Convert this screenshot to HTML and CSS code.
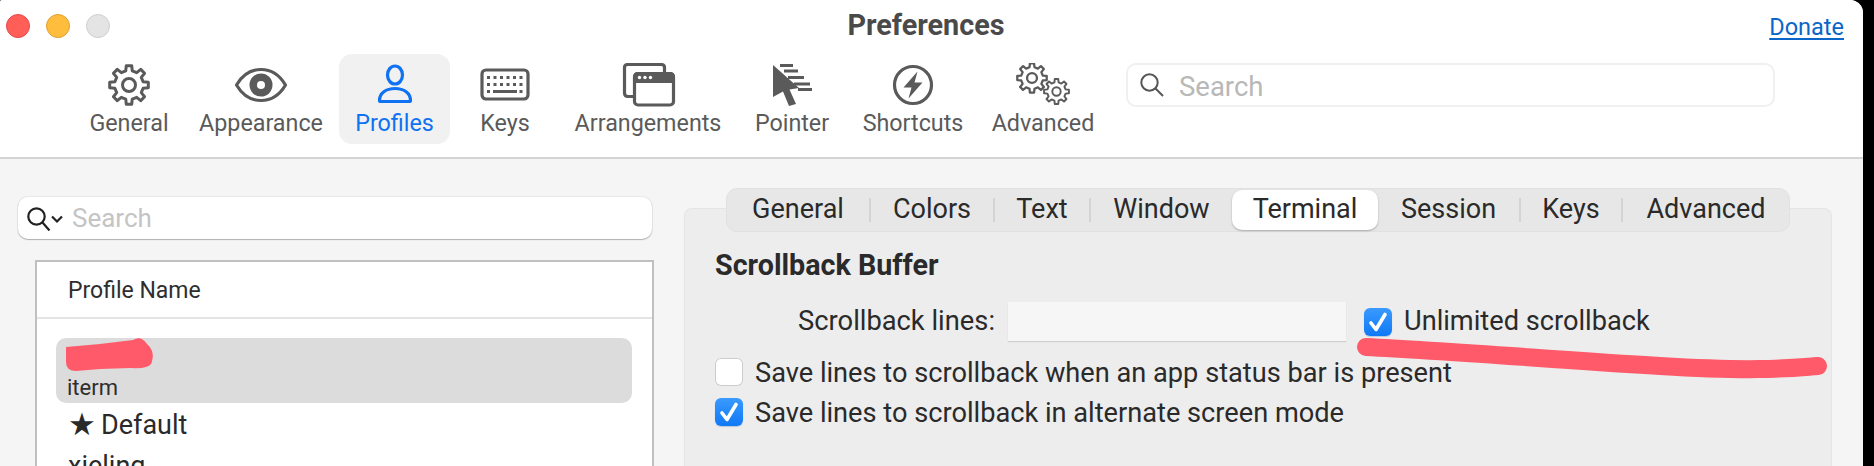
FILE: index.html
```html
<!DOCTYPE html>
<html lang="en">
<head>
<meta charset="utf-8">
<title>Preferences</title>
<link rel="stylesheet" href="styles.css">
</head>
<body>
<svg class="defs" width="0" height="0" aria-hidden="true">
  <symbol id="gear" viewBox="-21 -21 42 42">
    <polygon class="gear-shape" points="14.13,-3.26 19.31,-2.71 19.31,2.71 14.13,3.26 12.3,7.68 15.57,11.74 11.74,15.57 7.68,12.3 3.26,14.13 2.71,19.31 -2.71,19.31 -3.26,14.13 -7.68,12.3 -11.74,15.57 -15.57,11.74 -12.3,7.68 -14.13,3.26 -19.31,2.71 -19.31,-2.71 -14.13,-3.26 -12.3,-7.68 -15.57,-11.74 -11.74,-15.57 -7.68,-12.3 -3.26,-14.13 -2.71,-19.31 2.71,-19.31 3.26,-14.13 7.68,-12.3 11.74,-15.57 15.57,-11.74 12.3,-7.68"/>
    <circle class="gear-shape" r="6.5"/>
  </symbol>
  <symbol id="tick" viewBox="0 0 28 28">
    <path class="tick-shape" d="M7 15 L12 21.500 L21 6.500"/>
  </symbol>
</svg>
<div class="window">
  <header class="head">
    <div class="titlebar">
      <div class="lights">
        <span class="light light-red"></span>
        <span class="light light-yellow"></span>
        <span class="light light-gray"></span>
      </div>
      <div class="title">Preferences</div>
      <a class="donate" href="#">Donate</a>
    </div>
    <div class="toolbar">
      <nav class="tools">
        <div class="tool">
          <svg class="ico" viewBox="0 0 60 44"><use href="#gear" x="9" y="1" width="42" height="42"/></svg>
          <span class="tool-label">General</span>
        </div>
        <div class="tool">
          <svg class="ico" viewBox="0 0 60 44"><path class="line" d="M5.5 22 C12 11 21 6.5 30 6.5 S48 11 54.500 22 C48 33 39 37.500 30 37.500 S12 33 5.500 22 Z"/><circle class="solid" cx="30" cy="22" r="11.500"/><circle class="hole" cx="30" cy="22" r="4"/></svg>
          <span class="tool-label">Appearance</span>
        </div>
        <div class="tool tool-active">
          <svg class="ico" viewBox="0 0 60 44"><ellipse class="line-blue" cx="30" cy="12" rx="7.500" ry="9"/><path class="line-blue" d="M14.500 37.500 C14.500 30 21 25.500 30 25.500 S45.500 30 45.500 37.500 C45.500 38.300 45 38.500 44 38.500 H16 C15 38.500 14.500 38.300 14.500 37.500 Z"/></svg>
          <span class="tool-label">Profiles</span>
        </div>
        <div class="tool">
          <svg class="ico" viewBox="0 0 60 44"><rect class="line" x="7" y="7" width="46" height="29" rx="4"/><path class="keys" d="M12 13h3v3h-3zM18.500 13h3v3h-3zM25 13h3v3h-3zM31.500 13h3v3h-3zM38 13h3v3h-3zM44.500 13h3v3h-3zM12 20h3v3h-3zM18.500 20h3v3h-3zM25 20h3v3h-3zM31.500 20h3v3h-3zM38 20h3v3h-3zM44.500 20h3v3h-3zM12 27h3v3h-3zM18 27h24v3H18zM44.500 27h3v3h-3z"/></svg>
          <span class="tool-label">Keys</span>
        </div>
        <div class="tool">
          <svg class="ico" viewBox="0 0 60 44"><path class="line" d="M15 33.500 H10 Q6.500 33.500 6.500 30 V4.500 Q6.500 1.500 10 1.500 H43 Q46.500 1.500 46.500 4.500 V10"/><rect class="line" x="16.500" y="10.500" width="39" height="31.500" rx="3.500"/><path class="solid" d="M20 9 H52 Q57 9 57 14 V20 H15 V14 Q15 9 20 9 Z"/><circle class="hole" cx="21.500" cy="14.500" r="1.700"/><circle class="hole" cx="27" cy="14.500" r="1.700"/><circle class="hole" cx="32.500" cy="14.500" r="1.700"/></svg>
          <span class="tool-label">Arrangements</span>
        </div>
        <div class="tool">
          <svg class="ico" viewBox="0 0 60 44"><path class="solid" d="M11 2 L37 25 L27.500 26.500 L34 41 L27 43 L21 28.500 L11 34 Z"/><path class="streak" d="M18 2.500 H31 M22 8 H36 M26 14.500 H42 M32 21 H48 M36 26.500 H50"/></svg>
          <span class="tool-label">Pointer</span>
        </div>
        <div class="tool">
          <svg class="ico" viewBox="0 0 60 44"><circle class="line" cx="30" cy="22" r="18.500"/><path class="solid" d="M34.500 8.500 L20.500 24.500 H28.500 L25.500 35.500 L39.500 19.500 H31.500 Z"/></svg>
          <span class="tool-label">Shortcuts</span>
        </div>
        <div class="tool">
          <svg class="ico" viewBox="0 0 60 44"><use href="#gear" x="3" y="-1" width="32" height="32"/><use href="#gear" x="30" y="15" width="27" height="27"/></svg>
          <span class="tool-label">Advanced</span>
        </div>
      </nav>
      <div class="top-search">
        <svg class="top-search-icon" viewBox="0 0 24 24"><circle cx="9.500" cy="9.500" r="8.200"/><path d="M15.500 15.500 L23 23"/></svg>
        <span class="top-search-text">Search</span>
      </div>
    </div>
  </header>
  <main class="main">
    <section class="side">
      <div class="filter">
        <svg class="filter-icon" viewBox="0 0 36 24"><circle cx="9.500" cy="9.500" r="8.200"/><path d="M15.500 15.500 L22.500 23.500 M25 9.500 L30 14.500 L35 9.500"/></svg>
        <span class="filter-text">Search</span>
      </div>
      <div class="table">
        <div class="table-head">Profile Name</div>
        <div class="row-selected"><span class="row-tag">iterm</span></div>
        <div class="row"><span class="star">★</span>Default</div>
        <div class="row">xieling</div>
      </div>
    </section>
    <section class="panel">
      <div class="tabs">
        <div class="tab tab-general">General</div><i class="sep"></i>
        <div class="tab tab-colors">Colors</div><i class="sep"></i>
        <div class="tab tab-text">Text</div><i class="sep"></i>
        <div class="tab tab-window">Window</div>
        <div class="tab tab-terminal">Terminal</div>
        <div class="tab tab-session">Session</div><i class="sep"></i>
        <div class="tab tab-keys">Keys</div><i class="sep"></i>
        <div class="tab tab-advanced">Advanced</div>
      </div>
      <div class="pane">
        <h2 class="heading">Scrollback Buffer</h2>
        <div class="line-row">
          <label class="field-label">Scrollback lines:</label>
          <div class="field"></div>
          <span class="check check-on check-inline"><svg class="tick"><use href="#tick"/></svg></span>
          <span class="check-text check-text-inline">Unlimited scrollback</span>
        </div>
        <div class="opt opt-first">
          <span class="check"></span>
          <span class="check-text">Save lines to scrollback when an app status bar is present</span>
        </div>
        <div class="opt">
          <span class="check check-on"><svg class="tick"><use href="#tick"/></svg></span>
          <span class="check-text">Save lines to scrollback in alternate screen mode</span>
        </div>
      </div>
    </section>
  </main>
  <svg class="marks" viewBox="0 0 1863 466" width="1863" height="466" aria-hidden="true">
    <path class="mark-blob" d="M66 347 L100 344 L133 340 Q141 335 147 344 Q156 352 151 364 Q148 369 130 368 L100 369 L76 371 Q66 371 66 362 Z"/>
    <path class="mark-stroke" d="M1366 347 C1450 351 1560 360 1660 366 S1790 368 1818 366"/>
  </svg>
</div>
</body>
</html>
```
FILE: styles.css
```css
* { box-sizing: border-box; }
html, body { margin: 0; height: 100%; background: #000; overflow: hidden; }
body { font-family: Roboto, "Liberation Sans", sans-serif; color: #2a2a2a; }
.defs { position: absolute; }
.gear-shape { fill: none; stroke: #5a5a5a; stroke-width: 3; stroke-linejoin: round; }
.tick-shape { fill: none; stroke: #fff; stroke-width: 3.6; stroke-linecap: round; stroke-linejoin: round; }

.window { position: relative; width: 1863px; height: 466px; background: #f5f5f5; border-radius: 2px 13px 0 0; overflow: hidden; }
.head { height: 159px; background: #fff; border-bottom: 2px solid #d4d4d4; }

.titlebar { height: 54px; display: grid; grid-template-columns: 1fr auto 1fr; align-items: center; padding: 0 17px 2px 6px; }
.lights { display: flex; gap: 16px; }
.light { width: 24px; height: 24px; border-radius: 50%; border: 1px solid transparent; }
.light-red { background: #ff5f57; border-color: #e5484a; }
.light-yellow { background: #ffbd3e; border-color: #e0a030; }
.light-gray { background: #e4e4e4; border-color: #cfcfcf; }
.title { font-size: 28.800px; font-weight: 700; color: #4a4a4a; line-height: 30px; margin-top: -2px; }
.donate { justify-self: end; margin-right: 2px; margin-top: 2px; color: #0a66c8; font-size: 23.500px; text-decoration: underline; text-underline-offset: 3px; }

.toolbar { display: flex; padding-left: 73px; height: 103px; }
.tools { display: grid; grid-template-columns: 112px 152px 114px 108px 178px 110px 132px 128px; height: 90px; }
.tool { display: flex; flex-direction: column; align-items: center; color: #5a5a5a; padding-top: 9px; }
.tool-active { margin-left: 2px; margin-right: 1px; border-radius: 13px; background: #f1f1f1; color: #0f72f2; }
.ico { width: 60px; height: 44px; display: block; }
.tool-label { font-size: 23.300px; line-height: 26px; margin-top: 3px; white-space: nowrap; }
.line { fill: none; stroke: #5a5a5a; stroke-width: 3.2; stroke-linejoin: round; }
.line-blue { fill: none; stroke: #0f72f2; stroke-width: 3.2; stroke-linejoin: round; }
.solid { fill: #5a5a5a; }
.hole { fill: #fff; }
.keys { fill: #5a5a5a; }
.streak { fill: none; stroke: #5a5a5a; stroke-width: 2.8; }

.top-search { margin: 9px 0 0 19px; width: 649px; height: 44px; border: 2px solid #f0f0f0; border-radius: 10px; display: flex; align-items: center; padding-left: 12px; gap: 15px; }
.top-search-icon { width: 24px; height: 24px; fill: none; stroke: #555; stroke-width: 2; }
.top-search-text { font-size: 27.500px; line-height: 32px; margin-top: 4px; color: #b8b8b8; }

.main { display: flex; height: 307px; }
.side { width: 684px; padding: 38px 0 0 18px; flex: none; }
.filter { width: 634px; height: 42px; background: #fff; border-radius: 10px; box-shadow: 0 1px 1px #b0b0b0, 0 0 0 1px #e8e8e8; display: flex; align-items: center; padding-left: 9px; gap: 9px; }
.filter-icon { width: 36px; height: 24px; fill: none; stroke: #222; stroke-width: 2.2; margin-top: 1px; }
.filter-text { font-size: 26px; color: #c4c4c4; }

.table { width: 619px; height: 300px; margin: 21px 0 0 17px; border: 2px solid #c0c0c0; background: #fff; }
.table-head { height: 57px; border-bottom: 2px solid #e4e4e4; padding: 2px 0 0 31px; display: flex; align-items: center; font-size: 23px; color: #2e2e2e; }
.row-selected { height: 65px; margin: 19px 20px 0 19px; border-radius: 10px; background: #dcdcdc; padding: 38px 0 0 11px; }
.row-tag { display: block; font-size: 22px; line-height: 24px; color: #2e2e2e; }
.row { height: 41px; line-height: 45px; padding-left: 31px; font-size: 27px; color: #2a2a2a; white-space: nowrap; }
.star { display: inline-block; width: 33px; font-family: "DejaVu Sans", sans-serif; font-size: 31px; line-height: 30px; vertical-align: -1px; }

.panel { width: 1148px; height: 270px; margin-top: 49px; background: #ededed; border: 1px solid #e5e5e5; border-bottom: 0; border-radius: 8px 8px 0 0; }
.tabs { display: flex; align-items: center; width: 1064px; height: 44px; margin: -21px 0 0 41px; background: #e7e7e7; border: 1px solid #e1e1e1; border-radius: 11px; }
.tab { height: 40px; display: flex; align-items: center; justify-content: center; padding-bottom: 2px; font-size: 27px; color: #2a2a2a; }
.tab-general { width: 142px; }
.tab-colors { width: 122px; }
.tab-text { width: 94px; }
.tab-window { width: 141px; }
.tab-terminal { width: 146px; background: #fff; border-radius: 10px; box-shadow: 0 1px 2px #a8a8a8; }
.tab-session { width: 141px; }
.tab-keys { width: 100px; }
.tab-advanced { width: 166px; }
.sep { width: 2px; height: 24px; background: #d4d4d4; flex: none; }

.pane { padding: 18px 0 0 30px; }
.heading { margin: 0; font-size: 28.700px; line-height: 30px; font-weight: 700; color: #2a2a2a; }
.line-row { display: flex; align-items: center; margin-top: 22px; height: 39px; }
.field-label { width: 280px; text-align: right; font-size: 27.300px; line-height: 34px; margin-bottom: 2px; color: #2a2a2a; }
.field { width: 338px; height: 39px; margin-left: 13px; background: #f6f6f6; box-shadow: 0 1px 1px #cfcfcf; }
.check { width: 28px; height: 28px; flex: none; border-radius: 6px; background: #fff; box-shadow: inset 0 0 0 1px #cccccc; display: block; }
.check-on { background: linear-gradient(#3a9aff, #0f78f5); box-shadow: 0 1px 1px #b8c8dc; }
.check-inline { margin-left: 18px; }
.check-text { margin-left: 12px; font-size: 27.200px; line-height: 34px; margin-top: 2px; color: #2a2a2a; white-space: nowrap; }
.check-text-inline { margin-top: 0; margin-bottom: 2px; }
.tick { width: 28px; height: 28px; display: block; }
.opt { display: flex; align-items: center; height: 28px; margin-top: 12px; }
.opt-first { margin-top: 17px; }

.marks { position: absolute; left: 0; top: 0; pointer-events: none; }
.mark-blob { fill: #ff5a6a; }
.mark-stroke { fill: none; stroke: #ff5a6a; stroke-width: 18; stroke-linecap: round; }
```
